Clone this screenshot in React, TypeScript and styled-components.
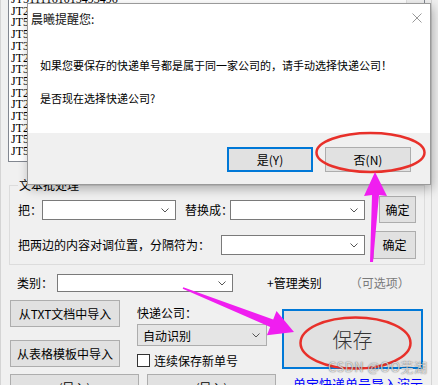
import styled, { createGlobalStyle } from "styled-components";

const GlobalStyle = createGlobalStyle`
  html, body {
    margin: 0;
    padding: 0;
    background: #f0f0f0;
  }
  body {
    font-family: "Noto Sans CJK SC", "Liberation Sans", sans-serif;
    font-size: 12px;
    color: #000;
  }
`;

const TRACKING_ROWS = [
  "JT5111161015493496",
  "JT2004815537128",
  "JT5009126472015",
  "JT5018836210944",
  "JT3101952748861",
  "JT2007735190486",
  "JT3105528843107",
  "JT5014407726638",
  "JT2006394817520",
  "JT2009918264335",
  "JT5012273049951",
  "JT2003361587206",
  "JT5017702938814",
  "JT5010085326479",
];

const Page = styled.div`
  position: relative;
  width: 438px;
  height: 385px;
  overflow: hidden;
  background: #f0f0f0;
`;

const Window = styled.div`
  width: 432px;
  height: 385px;
  box-sizing: border-box;
  border-left: 1px solid #d4d4d4;
  border-right: 1px solid #d4d4d4;
  display: flex;
  flex-direction: column;

  & > * {
    flex-shrink: 0;
  }
`;

const ListBox = styled.div`
  margin: -8px 6px 0 7px;
  height: 170px;
  box-sizing: border-box;
  border: 1px solid #828790;
  background: #fff;
  display: flex;
  overflow: hidden;
`;

const ListRows = styled.div`
  flex: 1;
  padding: 1px 0 0 2px;
  font-family: "Liberation Serif", serif;
  font-size: 12px;
  line-height: 11.7px;
  color: #000;
  white-space: nowrap;
`;

const ScrollTrack = styled.div`
  width: 17px;
  background: #f0f0f0;
  border-left: 1px solid #e0e0e0;
`;

const GroupBox = styled.div`
  position: relative;
  margin: 23px 6px 0 8px;
  height: 80px;
  box-sizing: border-box;
  border: 1px solid #dcdcdc;
  padding: 10px 0 0 8px;
`;

const Legend = styled.span`
  position: absolute;
  top: -8px;
  left: 8px;
  padding: 0 1px;
  background: #f0f0f0;
  line-height: 14px;
`;

const FormRow = styled.div<{ $height: number; $gap?: number }>`
  display: flex;
  align-items: center;
  height: ${({ $height }) => $height}px;
  margin-top: ${({ $gap }) => $gap ?? 0}px;
`;

const Label = styled.span<{ $width?: number; $left?: number; $muted?: boolean }>`
  display: inline-block;
  flex-shrink: 0;
  width: ${({ $width }) => ($width ? `${$width}px` : "auto")};
  margin-left: ${({ $left }) => $left ?? 0}px;
  line-height: 14px;
  white-space: nowrap;
  color: ${({ $muted }) => ($muted ? "#7a7a7a" : "#000")};
`;

const ComboBox = styled.div<{ $width: number; $height?: number; $readOnly?: boolean }>`
  position: relative;
  flex-shrink: 0;
  width: ${({ $width }) => $width}px;
  height: ${({ $height }) => $height ?? 20}px;
  box-sizing: border-box;
  border: 1px solid ${({ $readOnly }) => ($readOnly ? "#adadad" : "#7a7a7a")};
  background: ${({ $readOnly }) => ($readOnly ? "#e5e5e5" : "#fff")};
  display: flex;
  align-items: center;
  padding-left: 5px;
  font-size: 12px;
`;

const Chevron = styled.svg`
  position: absolute;
  right: 6px;
  top: 50%;
  margin-top: -2px;
`;

const Button = styled.button<{ $width: number; $height: number; $left?: number; $focused?: boolean }>`
  width: ${({ $width }) => $width}px;
  height: ${({ $height }) => $height}px;
  margin: 0 0 0 ${({ $left }) => $left ?? 0}px;
  padding: 0;
  box-sizing: border-box;
  flex-shrink: 0;
  border: ${({ $focused }) => ($focused ? "2px solid #0078d7" : "1px solid #adadad")};
  background: #e1e1e1;
  font-family: "Noto Sans CJK SC", "Liberation Sans", sans-serif;
  font-size: 12px;
  line-height: 14px;
  color: #000;
`;

const CategoryRow = styled.div`
  display: flex;
  align-items: center;
  height: 18px;
  margin: 9px 0 0 16px;
`;

const LowerSection = styled.div`
  display: flex;
  align-items: flex-start;
  margin: 8px 0 0 9px;
`;

const ImportColumn = styled.div`
  display: flex;
  flex-direction: column;
  gap: 13px;
`;

const CourierColumn = styled.div`
  display: flex;
  flex-direction: column;
  width: 130px;
  margin-left: 17px;
  padding-top: 6px;
`;

const CheckRow = styled.label`
  display: flex;
  align-items: center;
  height: 14px;
  margin-top: 7px;
  white-space: nowrap;
`;

const CheckBox = styled.span`
  width: 13px;
  height: 13px;
  box-sizing: border-box;
  border: 1px solid #333;
  background: #fff;
  margin-right: 4px;
`;

const SaveButton = styled.button`
  flex-shrink: 0;
  width: 141px;
  height: 60px;
  margin: 9px 0 0 15px;
  padding: 0;
  box-sizing: border-box;
  border: 2px solid #0078d7;
  background: #e1e1e1;
  font-family: "Noto Sans CJK SC", sans-serif;
  font-weight: 300;
  font-size: 20px;
  color: #333;
`;

const BottomRow = styled.div`
  display: flex;
  align-items: flex-start;
  margin: 5px 0 0 9px;
`;

const DemoLink = styled.span`
  margin: 3px 0 0 17px;
  font-size: 13px;
  line-height: 14px;
  color: #0000ff;
  white-space: nowrap;
`;

/* message box that sits over the main window */
const Dialog = styled.div`
  position: absolute;
  left: 27px;
  top: 3px;
  width: 404px;
  height: 182px;
  box-sizing: border-box;
  border: 1px solid #9a9a9a;
  background: #fff;
  box-shadow: 2px 4px 10px rgba(0, 0, 0, 0.28);
  display: flex;
  flex-direction: column;
  z-index: 5;
`;

const TitleBar = styled.div`
  display: flex;
  align-items: center;
  justify-content: space-between;
  height: 28px;
  padding: 0 8px 0 3px;
  font-size: 12px;
  color: #111;
`;

const DialogBody = styled.div`
  height: 101px;
  padding: 26px 0 0 12px;
  box-sizing: border-box;
  font-size: 11px;
  line-height: 14px;
  color: #000;
`;

const BodyLine = styled.p<{ $gap?: number }>`
  margin: ${({ $gap }) => $gap ?? 0}px 0 0;
  white-space: nowrap;
`;

const DialogFooter = styled.div`
  flex: 1;
  background: #f0f0f0;
  display: flex;
  justify-content: flex-end;
  align-items: flex-start;
  gap: 12px;
  padding: 14px 19px 0 0;
`;

const Annotations = styled.svg`
  position: absolute;
  left: 0;
  top: 0;
  z-index: 10;
  pointer-events: none;
`;

const Watermark = styled.span`
  position: absolute;
  left: 328px;
  top: 359px;
  z-index: 11;
  font-size: 13px;
  line-height: 15px;
  letter-spacing: 0.5px;
  color: rgba(255, 255, 255, 0.75);
  text-shadow: 0 0 1px rgba(0, 0, 0, 0.55), 0 0 2px rgba(0, 0, 0, 0.25);
  white-space: nowrap;
`;

function ComboArrow() {
  return (
    <Chevron width="8" height="5" viewBox="0 0 8 5">
      <polyline points="0.5,0.5 4,4 7.5,0.5" fill="none" stroke="#555" strokeWidth="1" />
    </Chevron>
  );
}

export default function App() {
  return (
    <>
      <GlobalStyle />
      <Page>
        <Window>
          <ListBox>
            <ListRows>
              {TRACKING_ROWS.map((row) => (
                <div key={row}>{row}</div>
              ))}
            </ListRows>
            <ScrollTrack />
          </ListBox>

          <GroupBox>
            <Legend>文本批处理</Legend>
            <FormRow $height={27}>
              <Label $width={24}>把：</Label>
              <ComboBox $width={134}>
                <ComboArrow />
              </ComboBox>
              <Label $width={45} $left={9}>替换成：</Label>
              <ComboBox $width={135}>
                <ComboArrow />
              </ComboBox>
              <Button $width={37} $height={27} $left={14}>确定</Button>
            </FormRow>
            <FormRow $height={28} $gap={8}>
              <Label $width={203}>把两边的内容对调位置，分隔符为：</Label>
              <ComboBox $width={144}>
                <ComboArrow />
              </ComboBox>
              <Button $width={43} $height={28} $left={8}>确定</Button>
            </FormRow>
          </GroupBox>

          <CategoryRow>
            <Label $width={40}>类别：</Label>
            <ComboBox $width={176} $height={18}>
              <ComboArrow />
            </ComboBox>
            <Label $left={34}>+管理类别</Label>
            <Label $left={28} $muted>（可选项）</Label>
          </CategoryRow>

          <LowerSection>
            <ImportColumn>
              <Button $width={110} $height={27}>从TXT文档中导入</Button>
              <Button $width={110} $height={27}>从表格模板中导入</Button>
            </ImportColumn>
            <CourierColumn>
              <Label>快递公司：</Label>
              <ComboBox $width={130} $height={22} $readOnly style={{ marginTop: 4 }}>
                自动识别
                <ComboArrow />
              </ComboBox>
              <CheckRow>
                <CheckBox />
                连续保存新单号
              </CheckRow>
            </CourierColumn>
            <SaveButton>保存</SaveButton>
          </LowerSection>

          <BottomRow>
            <Button $width={129} $height={27}>(导入)</Button>
            <Button $width={129} $height={27} $left={8}>(导入)</Button>
            <DemoLink>单宝快递单号导入演示</DemoLink>
          </BottomRow>
        </Window>

        <Dialog>
          <TitleBar>
            <span>晨曦提醒您:</span>
            <svg width="10" height="10" viewBox="0 0 10 10">
              <path d="M0.5 0.5 L9.5 9.5 M9.5 0.5 L0.5 9.5" stroke="#9a9a9a" strokeWidth="1" />
            </svg>
          </TitleBar>
          <DialogBody>
            <BodyLine>如果您要保存的快递单号都是属于同一家公司的，请手动选择快递公司！</BodyLine>
            <BodyLine $gap={19}>是否现在选择快递公司?</BodyLine>
          </DialogBody>
          <DialogFooter>
            <Button $width={86} $height={25} $focused>是(Y)</Button>
            <Button $width={86} $height={25}>否(N)</Button>
          </DialogFooter>
        </Dialog>

        <Annotations width="438" height="385" viewBox="0 0 438 385">
          <ellipse cx="370.5" cy="152.5" rx="54" ry="19.5" fill="none" stroke="#e8302a" strokeWidth="2.5" />
          <ellipse cx="355.5" cy="343" rx="55" ry="25.5" fill="none" stroke="#e8302a" strokeWidth="2.5" />
          <polygon
            points="370,262 372,195 364,196 375,172 387,196 379,195 373,262"
            fill="#f01ef0"
          />
          <polygon
            points="183.3,287.3 273.2,319.5 276.5,311.1 294,332 266.9,335.3 270.2,326.9 182.7,288.7"
            fill="#f01ef0"
          />
        </Annotations>
        <Watermark>CSDN @OO芜湖</Watermark>
      </Page>
    </>
  );
}
